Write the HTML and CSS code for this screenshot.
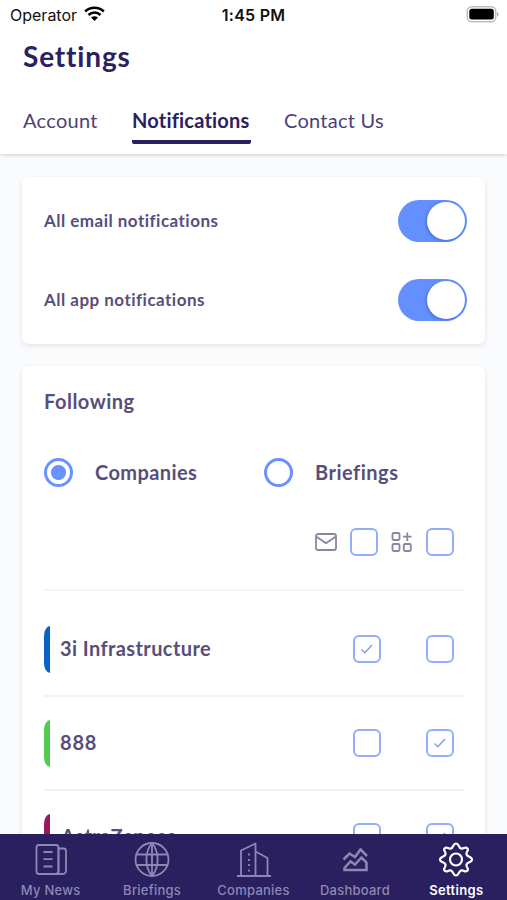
FILE: index.html
```html
<!DOCTYPE html>
<html lang="en">
<head>
<meta charset="utf-8">
<meta name="viewport" content="width=device-width">
<title>Settings</title>
<link rel="stylesheet" href="styles.css">
</head>
<body>
<div class="app">
  <header class="header">
    <div class="status">
      <span class="carrier">Operator
        <svg width="21" height="16" viewBox="0 0 21 16"><g fill="none" stroke="#000" stroke-width="2.7"><path d="M1.2 5.4C6.5.5 14.5.5 19.8 5.4"/><path d="M4.5 8.9C8 5.7 13 5.7 16.5 8.9"/></g><path d="M10.500 15L7 11.500Q10.500 8.800 14 11.500Z"/></svg>
      </span>
      <span class="clock">1:45 PM</span>
      <svg class="battery" width="33" height="17" viewBox="0 0 33 17"><rect x="1.250" y=".75" width="28.500" height="15" rx="4.500" fill="#fff" stroke="#bdbdbd" stroke-width="1.500"/><rect x="3.300" y="2.800" width="24.500" height="10.800" rx="2.500"/><path d="M31 6v4.500q1.500-.6 1.500-2.200T31 6" fill="#aaa"/></svg>
    </div>
    <h1 class="title">Settings</h1>
    <nav class="tabs">
      <a class="tab tab-account">Account</a>
      <a class="tab tab-active">Notifications</a>
      <a class="tab tab-contact">Contact Us</a>
    </nav>
  </header>

  <main class="content">
    <section class="card toggles">
      <div class="toggle-row"><span class="toggle-label">All email notifications</span><span class="switch"><i></i></span></div>
      <div class="toggle-row"><span class="toggle-label">All app notifications</span><span class="switch"><i></i></span></div>
    </section>

    <section class="card following">
      <h2 class="subtitle">Following</h2>
      <div class="radios">
        <label class="radio"><span class="dot checked"></span><span class="companies">Companies</span></label>
        <label class="radio"><span class="dot"></span><span class="briefings">Briefings</span></label>
      </div>
      <div class="select-all">
        <svg class="mail" width="24" height="20" viewBox="0 0 24 20"><g fill="none" stroke="#8c859f" stroke-width="1.800" stroke-linejoin="round"><rect x="2" y="2" width="20" height="16" rx="2"/><path d="M2.500 4.700L12 11.300 21.500 4.700"/></g></svg>
        <span class="box"></span>
        <svg class="grid-icon" width="22" height="22" viewBox="0 0 22 22"><g fill="none" stroke="#8c859f" stroke-width="1.800"><rect x="1.500" y="2" width="7" height="7" rx="1.200"/><rect x="1.500" y="13" width="7" height="7" rx="1.200"/><rect x="12.800" y="13" width="7" height="7" rx="1.200"/><path d="M16.300 1.500v8.500M12 5.700h8.500"/></g></svg>
        <span class="box"></span>
      </div>
      <div class="company first">
        <i class="mark blue"></i><span class="name infra">3i Infrastructure</span>
        <span class="box"><svg width="14" height="12" viewBox="0 0 14 12"><path d="M1.500 6.500L4.800 9.700 12 2"/></svg></span>
        <span class="box"></span>
      </div>
      <div class="company">
        <i class="mark green"></i><span class="name num">888</span>
        <span class="box"></span>
        <span class="box"><svg width="14" height="12" viewBox="0 0 14 12"><path d="M1.500 6.500L4.800 9.700 12 2"/></svg></span>
      </div>
      <div class="company">
        <i class="mark plum"></i><span class="name astra">AstraZeneca</span>
        <span class="box"></span>
        <span class="box"><svg width="14" height="12" viewBox="0 0 14 12"><path d="M1.500 6.500L4.800 9.700 12 2"/></svg></span>
      </div>
    </section>
  </main>

  <nav class="bottom">
    <a class="item news"><svg width="36" height="36" viewBox="0 0 36 36"><rect x="3.500" y="3" width="22" height="29" rx="2.500"/><path d="M25.500 6.500h5q2.500 0 2.500 2.500V28.500q0 3.500-3.500 3.500h-6.500M25.500 6v22.500q0 3.500-3 3.500M10.500 10h9M10.500 17.200h9M10.500 24.500h9"/></svg><span>My News</span></a>
    <a class="item brief"><svg width="36" height="36" viewBox="0 0 36 36"><circle cx="18" cy="17.500" r="16.500"/><path d="M18 1v33M18 1C10.500 10 10.500 25 18 34M18 1C25.500 10 25.500 25 18 34M2.300 12.500h31.400M2.300 23h31.400"/></svg><span>Briefings</span></a>
    <a class="item comp"><svg width="36" height="36" viewBox="0 0 36 36"><path d="M1 34h34M5 34V8.500L19.500 1.500V34M19.500 9.500L31.500 16V34"/><path d="M13 11.500v2M13 17v2M13 22v2M13 27.500v2"/></svg><span>Companies</span></a>
    <a class="item dash"><svg width="36" height="36" viewBox="0 0 36 36"><path stroke-linejoin="miter" stroke-width="2.500" d="M6.500 17.500L12.500 11.500 18 15 23.500 7.500 30 14M7.500 28H29.500V20.500L24.500 15.500 18 22.500 13.500 19.500 7.500 26Z"/></svg><span>Dashboard</span></a>
    <a class="item sett"><svg width="36" height="36" viewBox="0 0 36 36"><circle cx="18" cy="17.500" r="6"/><path d="M18 1.500C21 1.500 20.500 5.500 23 6.500S27 4 29.300 6.200 27.500 10 28.500 12.500 34 14.500 34 17.500 29.500 20 28.500 22.500 31.500 26.600 29.300 28.800 25.500 27.500 23 28.500 21 33.500 18 33.500 15.500 29.500 13 28.500 9 31 6.700 28.800 8.500 25 7.500 22.500 2 20.500 2 17.500 6.500 15 7.500 12.500 4.500 8.400 6.700 6.200 10.500 7.500 13 6.500 15 1.500 18 1.500Z"/></svg><span>Settings</span></a>
  </nav>
</div>
</body>
</html>
```
FILE: styles.css
```css
* { box-sizing: border-box; }
body { margin: 0; font-family: Lato, "Open Sans", sans-serif; }
.app { width: 507px; height: 900px; display: flex; flex-direction: column; overflow: hidden; background: #fafbfd; color: #574e7d; }
svg { display: block; flex: none; }
.header { height: 154px; flex: none; background: #fff; box-shadow: 0 1px 4px rgba(0,0,0,.18); z-index: 1; }
.status { height: 30px; padding: 0 8px 0 10px; display: grid; grid-template-columns: 1fr auto 1fr; align-items: center; font: 16px Inter, sans-serif; color: #111; }
.carrier { display: flex; align-items: center; gap: 7px; }
.carrier svg { margin-top: -2px; }
.clock { font-weight: 600; letter-spacing: .25px; margin-right: 2px; }
.battery { justify-self: end; margin-top: -2px; }
.title { margin: 8px 0 0 23px; font-size: 28px; line-height: 36px; font-weight: 700; letter-spacing: .85px; color: #2b2060; }
.tabs { display: flex; margin: 29px 0 0 23px; font-size: 20px; line-height: 34px; letter-spacing: .25px; }
.tab { height: 41px; color: #4a4178; white-space: nowrap; }
.tab-account { width: 109px; letter-spacing: .3px; }
.tab-active { width: 119px; margin-right: 33px; font-weight: 700; letter-spacing: .2px; color: #2b2060; border-bottom: 4px solid #2b2060; border-radius: 2px; }
.content { flex: 1; min-height: 0; overflow: hidden; padding: 23px 22px 0; display: flex; flex-direction: column; gap: 22px; }
.card { flex: none; background: #fff; border-radius: 7px; box-shadow: 0 2px 5px rgba(30,30,60,.1); }
.toggles { height: 167px; padding: 4px 18.5px 0 22px; }
.toggle-row { height: 79.5px; display: flex; justify-content: space-between; align-items: center; font-size: 17px; font-weight: 700; letter-spacing: .48px; }
.toggle-label { padding-bottom: 1px; }
.switch { width: 69px; height: 42px; padding: 2px; border-radius: 21px; background: #648fff; display: flex; justify-content: flex-end; }
.switch i { width: 38px; height: 38px; border-radius: 50%; background: #fff; box-shadow: -1px 1px 3px rgba(20,40,120,.35); }
.following { height: 520px; padding: 22px 21px 0 22px; font-size: 20px; font-weight: 700; letter-spacing: .4px; }
.subtitle { margin: 0; font-size: 20px; line-height: 27px; letter-spacing: .5px; }
.radios { display: flex; margin-top: 42px; }
.radio { display: flex; flex: none; align-items: center; gap: 22px; width: 220px; height: 30px; white-space: nowrap; }
.radio span + span { padding-bottom: 1px; }
.radio + .radio { width: auto; }
.briefings { letter-spacing: .5px; }
.dot { width: 29px; height: 29px; border: 3px solid #6893fd; border-radius: 50%; flex: none; }
.checked { background: radial-gradient(circle, #6893fd 7px, #fff 8px); }
.select-all { display: flex; align-items: center; height: 104px; padding: 8px 10px 0 0; justify-content: flex-end; border-bottom: 2px solid #f2f3fd; }
.box { width: 28px; height: 28px; border: 2px solid #91adfc; border-radius: 6px; flex: none; display: flex; align-items: center; justify-content: center; }
.box svg path { fill: none; stroke: #829df0; stroke-width: 1.5; }
.mail { margin-right: 12px; }
.grid-icon { margin: 0 13px; }
.company { display: flex; align-items: center; height: 94px; padding-right: 10px; border-bottom: 2px solid #f0f2fc; }
.company .box + .box { margin-left: 45px; }
.first { height: 106px; padding-top: 12px; }
.company:last-child { height: 92px; border: 0; }
.mark { width: 6px; height: 47px; border-radius: 6px 0 0 6px / 10px 0 0 10px; margin-right: 10px; }
.blue { background: #0863c5; }
.green { background: #50cc50; }
.plum { background: #981866; }
.name { flex: 1; white-space: nowrap; padding-bottom: 2px; }
.num { letter-spacing: .8px; }
.astra { padding-left: 1px; padding-bottom: 3px; }
.bottom { flex: none; height: 66px; padding-top: 8px; display: flex; background: #2a205f; color: #8e87b4; font: 500 13px Inter, sans-serif; letter-spacing: .25px; z-index: 1; }
.item { flex: 1; display: flex; flex-direction: column; align-items: center; gap: 4px; white-space: nowrap; }
.item svg { fill: none; stroke: #8e87b4; stroke-width: 1.8; stroke-linejoin: round; }
.sett { color: #fff; font-weight: 600; letter-spacing: .35px; }
.item.sett svg { stroke: #fff; stroke-width: 2.2; }
```
